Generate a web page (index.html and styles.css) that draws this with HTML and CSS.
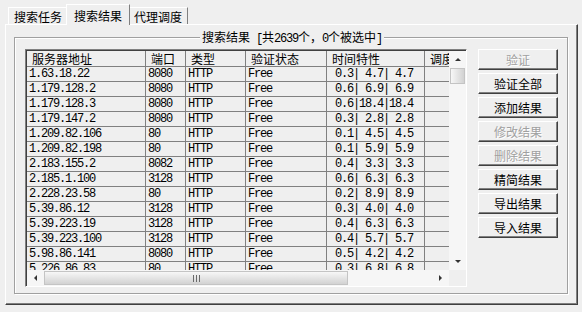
FILE: index.html
```html
<!DOCTYPE html>
<html lang="zh-CN">
<head>
    <meta charset="UTF-8">
    <title>代理搜索</title>
    <link rel="stylesheet" href="styles.css">
</head>
<body>
    <div class="tabctl">
        <div class="tabs">
            <div class="tab">搜索任务</div>
            <div class="tab active">搜索结果</div>
            <div class="tab">代理调度</div>
        </div>
        <div class="panel">
            <div class="group">
                <div class="group-title">搜索结果<span class="a"> [</span>共<span class="a">2639</span>个，<span class="a">0</span>个被选中<span class="a">]</span></div>
                <div class="group-body">
                    <div class="list">
                        <div class="list-in">
                            <div class="view">
                                <table class="grid">
                                    <tr>
                                        <th class="c1">服务器地址</th>
                                        <th class="c2">端口</th>
                                        <th class="c3">类型</th>
                                        <th class="c4">验证状态</th>
                                        <th class="c5">时间特性</th>
                                        <th class="c6">调度</th>
                                    </tr>
                                    <tr><td>1.63.18.22</td><td>8080</td><td>HTTP</td><td>Free</td><td> 0.3| 4.7| 4.7</td><td></td></tr>
                                    <tr><td>1.179.128.2</td><td>8080</td><td>HTTP</td><td>Free</td><td> 0.6| 6.9| 6.9</td><td></td></tr>
                                    <tr><td>1.179.128.3</td><td>8080</td><td>HTTP</td><td>Free</td><td> 0.6|18.4|18.4</td><td></td></tr>
                                    <tr><td>1.179.147.2</td><td>8080</td><td>HTTP</td><td>Free</td><td> 0.3| 2.8| 2.8</td><td></td></tr>
                                    <tr><td>1.209.82.106</td><td>80</td><td>HTTP</td><td>Free</td><td> 0.1| 4.5| 4.5</td><td></td></tr>
                                    <tr><td>1.209.82.198</td><td>80</td><td>HTTP</td><td>Free</td><td> 0.1| 5.9| 5.9</td><td></td></tr>
                                    <tr><td>2.183.155.2</td><td>8082</td><td>HTTP</td><td>Free</td><td> 0.4| 3.3| 3.3</td><td></td></tr>
                                    <tr><td>2.185.1.100</td><td>3128</td><td>HTTP</td><td>Free</td><td> 0.6| 6.3| 6.3</td><td></td></tr>
                                    <tr><td>2.228.23.58</td><td>80</td><td>HTTP</td><td>Free</td><td> 0.2| 8.9| 8.9</td><td></td></tr>
                                    <tr><td>5.39.86.12</td><td>3128</td><td>HTTP</td><td>Free</td><td> 0.3| 4.0| 4.0</td><td></td></tr>
                                    <tr><td>5.39.223.19</td><td>3128</td><td>HTTP</td><td>Free</td><td> 0.4| 6.3| 6.3</td><td></td></tr>
                                    <tr><td>5.39.223.100</td><td>3128</td><td>HTTP</td><td>Free</td><td> 0.4| 5.7| 5.7</td><td></td></tr>
                                    <tr><td>5.98.86.141</td><td>8080</td><td>HTTP</td><td>Free</td><td> 0.5| 4.2| 4.2</td><td></td></tr>
                                    <tr><td>5.226.86.83</td><td>80</td><td>HTTP</td><td>Free</td><td> 0.3| 6.8| 6.8</td><td></td></tr>
                                </table>
                            </div>
                            <div class="vscroll">
                                <div class="arrow"><span class="tri up"></span></div>
                                <div class="thumb-v"></div>
                                <div class="track"></div>
                                <div class="arrow"><span class="tri down"></span></div>
                            </div>
                            <div class="hscroll">
                                <div class="arrow-h"><span class="tri left"></span></div>
                                <div class="thumb-h"></div>
                                <div class="track"></div>
                                <div class="arrow-h"><span class="tri right"></span></div>
                            </div>
                            <div class="corner"></div>
                        </div>
                    </div>
                    <div class="btns">
                        <button class="btn" disabled>验证</button>
                        <button class="btn">验证全部</button>
                        <button class="btn">添加结果</button>
                        <button class="btn" disabled>修改结果</button>
                        <button class="btn" disabled>删除结果</button>
                        <button class="btn">精简结果</button>
                        <button class="btn">导出结果</button>
                        <button class="btn">导入结果</button>
                    </div>
                </div>
            </div>
        </div>
    </div>
</body>
</html>
```
FILE: styles.css
```css
body {
    margin: 0;
    background: #efefef;
    font: 12px "Noto Sans CJK SC", sans-serif;
    color: #000;
}

/* вкладки */
.tabctl {
    margin: 3px 4px 0 5px;
}

.tabs {
    display: flex;
    align-items: flex-end;
    height: 21px;
    padding-left: 3px;
}

.tab {
    height: 17px;
    padding: 1px 5px 0;
    line-height: 16px;
    border: 1px solid;
    border-color: #fff #808080 transparent #fff;
    border-bottom: 0;
    box-sizing: border-box;
}

.tab.active {
    position: relative;
    z-index: 1;
    height: 21px;
    padding: 3px 7px 0;
    margin: 0 -2px -1px;
    background: #efefef;
}

.panel {
    height: 281px;
    box-sizing: border-box;
    border: 1px solid;
    border-color: #fff #404040 #404040 #fff;
    box-shadow: inset -1px -1px 0 #808080;
    padding: 12px 9px 0 8px;
}

/* группа */
.group {
    height: 257px;
    box-sizing: border-box;
    border: 1px solid #a0a0a0;
    box-shadow: 1px 1px 0 #fff, inset 1px 1px 0 #fff;
    padding: 0 8px 0 10px;
}

.group-title {
    width: fit-content;
    margin: -9px auto 0;
    padding: 0 2px;
    line-height: 16px;
    background: #efefef;
    position: relative;
}

.a {
    font-family: "Liberation Mono", monospace;
    font-size: 12px;
    letter-spacing: -1.2px;
}

.group-body {
    display: flex;
    gap: 11px;
    margin-top: 2px;
}

/* список */
.list {
    width: 442px;
    height: 238px;
    box-sizing: border-box;
    border: 1px solid;
    border-color: #808080 #fff #fff #808080;
}

.list-in {
    height: 100%;
    box-sizing: border-box;
    border-top: 1px solid #404040;
    border-left: 1px solid #404040;
    display: grid;
    grid-template-columns: 1fr 17px;
    grid-template-rows: 1fr 16px;
}

.view {
    overflow: hidden;
    min-width: 0;
    min-height: 0;
}

.grid {
    table-layout: fixed;
    border-collapse: separate;
    border-spacing: 0;
    width: 468px;
}

.grid th,
.grid td {
    box-sizing: border-box;
    border-right: 1px solid #808080;
    border-bottom: 1px solid #808080;
    white-space: pre;
    overflow: hidden;
    text-align: left;
    padding: 0 0 0 2px;
}

.grid th {
    height: 16px;
    line-height: 15px;
    font-weight: normal;
    padding-left: 5px;
}

.grid td {
    height: 15px;
    line-height: 14px;
    font-family: "Liberation Mono", monospace;
    font-size: 12px;
    letter-spacing: -1.2px;
}

.c1 { width: 119px; }
.c2 { width: 40px; }
.c3 { width: 60px; }
.c4 { width: 81px; }
.c5 { width: 98px; }
.c6 { width: 70px; }

/* полосы прокрутки */
.vscroll {
    display: flex;
    flex-direction: column;
    align-items: center;
    background: #f6f6f6;
}

.hscroll {
    display: flex;
    align-items: center;
    background: #f6f6f6;
}

.track {
    flex: 1;
}

.arrow {
    height: 17px;
    width: 100%;
    display: flex;
    align-items: center;
    justify-content: center;
}

.arrow-h {
    width: 17px;
    height: 100%;
    display: flex;
    align-items: center;
    justify-content: center;
}

.tri {
    width: 0;
    height: 0;
    border: 3px solid transparent;
}

.tri.up { border-bottom-color: #333; border-top-width: 0; }
.tri.down { border-top-color: #333; border-bottom-width: 0; }
.tri.left { border-right-color: #333; border-left-width: 0; }
.tri.right { border-left-color: #333; border-right-width: 0; }

.thumb-v {
    width: 15px;
    height: 16px;
    box-sizing: border-box;
    border: 1px solid #c4c4c4;
    background: linear-gradient(to right, #f7f7f7, #d2d2d2);
}

.thumb-h {
    width: 304px;
    height: 14px;
    box-sizing: border-box;
    border: 1px solid #c4c4c4;
    background: linear-gradient(to bottom, #f7f7f7, #d2d2d2);
    display: flex;
    align-items: center;
    justify-content: center;
}

.thumb-h::after {
    content: "";
    width: 7px;
    height: 7px;
    background: repeating-linear-gradient(90deg, #6a6a6a 0 1px, transparent 1px 3px);
}

.corner {
    background: #efefef;
}

/* кнопки */
.btns {
    display: flex;
    flex-direction: column;
    gap: 3px;
}

.btn {
    width: 80px;
    height: 21px;
    box-sizing: border-box;
    padding: 0;
    border: 1px solid;
    border-color: #fff #404040 #404040 #fff;
    box-shadow: inset -1px -1px 0 #808080;
    background: #efefef;
    font: 12px "Noto Sans CJK SC", sans-serif;
    line-height: 18px;
    color: #000;
}

.btn:disabled {
    color: #a0a0a0;
    text-shadow: 1px 1px 0 #fff;
}
```
